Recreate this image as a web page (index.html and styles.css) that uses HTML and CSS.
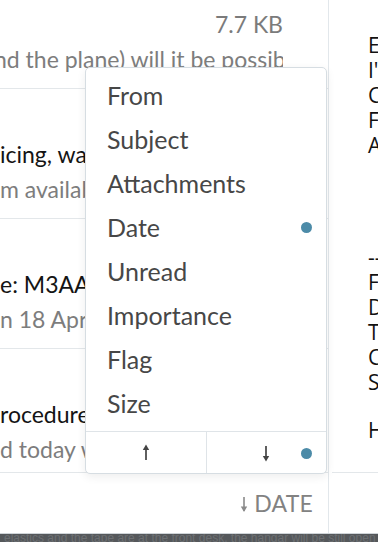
FILE: index.html
```
<!DOCTYPE html>
<html lang="en">
<head>
    <meta charset="UTF-8">
    <meta name="viewport" content="width=device-width, initial-scale=1.0">
    <title>Mail</title>
    <link rel="stylesheet" href="styles.css">
</head>
<body>
    <div class="screen">
        <div class="panes">
            <section class="list">
                <div class="items">
                    <div class="item first">
                        <div class="subject"><span class="subj"></span><span class="size">7.7 KB</span></div>
                        <div class="preview cut">nd the plane) will it be possible to</div>
                    </div>
                    <div class="item">
                        <div class="subject"><span class="subj">icing, water and fuel</span><span class="size">12 KB</span></div>
                        <div class="preview">m available at the field</div>
                    </div>
                    <div class="item">
                        <div class="subject"><span class="subj">e: M3AAV booking</span><span class="size">9 KB</span></div>
                        <div class="preview">n 18 April at the airfield</div>
                    </div>
                    <div class="item">
                        <div class="subject"><span class="subj">rocedures update</span><span class="size">5 KB</span></div>
                        <div class="preview">d today will be sent</div>
                    </div>
                </div>
                <div class="list-foot">
                    <span class="sort">
                        <svg class="arrow" width="10" height="18" viewBox="0 0 10 18"><path d="M5 3V17" stroke="#8a8a8a" stroke-width="1.6"/><path d="M5 18L1.8 12.5H8.2Z" fill="#8a8a8a"/></svg>
                        DATE
                    </span>
                </div>

                <div class="menu">
                    <div class="menu-items">
                        <div class="menu-item">From</div>
                        <div class="menu-item">Subject</div>
                        <div class="menu-item">Attachments</div>
                        <div class="menu-item on">Date<span class="dot"></span></div>
                        <div class="menu-item">Unread</div>
                        <div class="menu-item">Importance</div>
                        <div class="menu-item">Flag</div>
                        <div class="menu-item">Size</div>
                    </div>
                    <div class="menu-foot">
                        <div class="dir">
                            <svg width="10" height="18" viewBox="0 0 10 18"><path d="M5 2V16" stroke="#444" stroke-width="1.7"/><path d="M5 0.5L1.8 6H8.2Z" fill="#444"/></svg>
                        </div>
                        <div class="dir on">
                            <svg width="10" height="18" viewBox="0 0 10 18"><path d="M5 2V16" stroke="#444" stroke-width="1.7"/><path d="M5 17.5L1.8 12H8.2Z" fill="#444"/></svg>
                            <span class="dot"></span>
                        </div>
                    </div>
                </div>
            </section>
            <section class="reader">
                <div class="body">
                    <p>Evening all,<br>I've attached the notes<br>Can someone confirm<br>For the trip on Sunday<br>Any questions let me know</p>
                    <p class="quote">-- <br>From: Operations<br>Date: 18 April<br>To: Members<br>Cc: Committee<br>Subject: Procedures</p>
                    <p class="quote2">Hi everyone,</p>
                </div>
            </section>
        </div>
        <div class="strip">elastics and the tape are at the front desk, the hangar will be still open till late with the</div>
    </div>
</body>
</html>
```

FILE: styles.css
```
*{margin: 0;padding: 0;box-sizing: border-box;}
body{width: 378px; height: 542px; overflow: hidden; background: #fff; font-family: Lato, "Liberation Sans", sans-serif;}
.screen{display: flex; flex-direction: column; height: 542px;}
.panes{display: flex; height: 533px;}

/* message list */
.list{position: relative; width: 329px; border-right: 1px solid #e2e7eb; display: flex; flex-direction: column;}
.items{height: 473px; overflow: hidden; border-bottom: 1px solid #e3e7ea;}
.item{height: 130px; padding: 48px 45px 0 0; border-bottom: 1px solid #e3e7ea;}
.item.first{margin-top: -41px;}
.subject{display: flex; height: 34px; line-height: 34px; font-size: 23px; color: #141414; white-space: nowrap;}
.subj{flex: 1; overflow: hidden;}
.size{color: #7b7b7b; padding-left: 10px;}
.preview{height: 36px; line-height: 36px; font-size: 23px; color: #7d7d7d; white-space: nowrap; overflow: hidden;}
.cut{text-indent: -6px;}
.list-foot{flex: 1; display: flex; align-items: center; justify-content: flex-end; padding: 0 15px 0 0;}
.sort{display: flex; align-items: center; gap: 5px; font-size: 23px; color: #828282; letter-spacing: 0.2px;}

/* sort menu */
.menu{position: absolute; left: 85px; top: 67px; width: 242px; height: 407px; background: #fff; border: 1px solid #d6dde2; border-radius: 5px; box-shadow: 0 3px 10px rgba(0,0,0,.07); display: flex; flex-direction: column;}
.menu-items{padding-top: 5px; flex: 1;}
.menu-item{position: relative; height: 44px; line-height: 44px; padding-left: 21px; font-size: 25px; color: #474747;}
.dot{position: absolute; right: 14px; top: 50%; width: 11px; height: 11px; margin-top: -5px; border-radius: 50%; background: #4c8ba8;}
.menu-foot{display: flex; height: 42px; border-top: 1px solid #dfe4e8;}
.dir{position: relative; flex: 1; display: flex; align-items: center; justify-content: center;}
.dir + .dir{border-left: 1px solid #dfe4e8;}

/* reading pane */
.reader{flex: 1; overflow: hidden;}
.reader .body{height: 473px; margin-left: 3px; padding: 33px 0 0 36px; border-bottom: 1px solid #e3e7ea; overflow: hidden; font-family: "Open Sans", "DejaVu Sans", sans-serif; font-size: 21px; line-height: 25px; color: #121212; white-space: nowrap;}
.reader .quote{margin-top: 87px;}
.reader .quote2{margin-top: 23px;}

.strip{height: 9px; border-top: 1px solid #cfd4d8; background: #55585b; color: #6c6f72; font-family: "Liberation Sans", sans-serif; font-size: 12px; line-height: 9px; white-space: nowrap; overflow: hidden; padding-left: 4px;}
```
